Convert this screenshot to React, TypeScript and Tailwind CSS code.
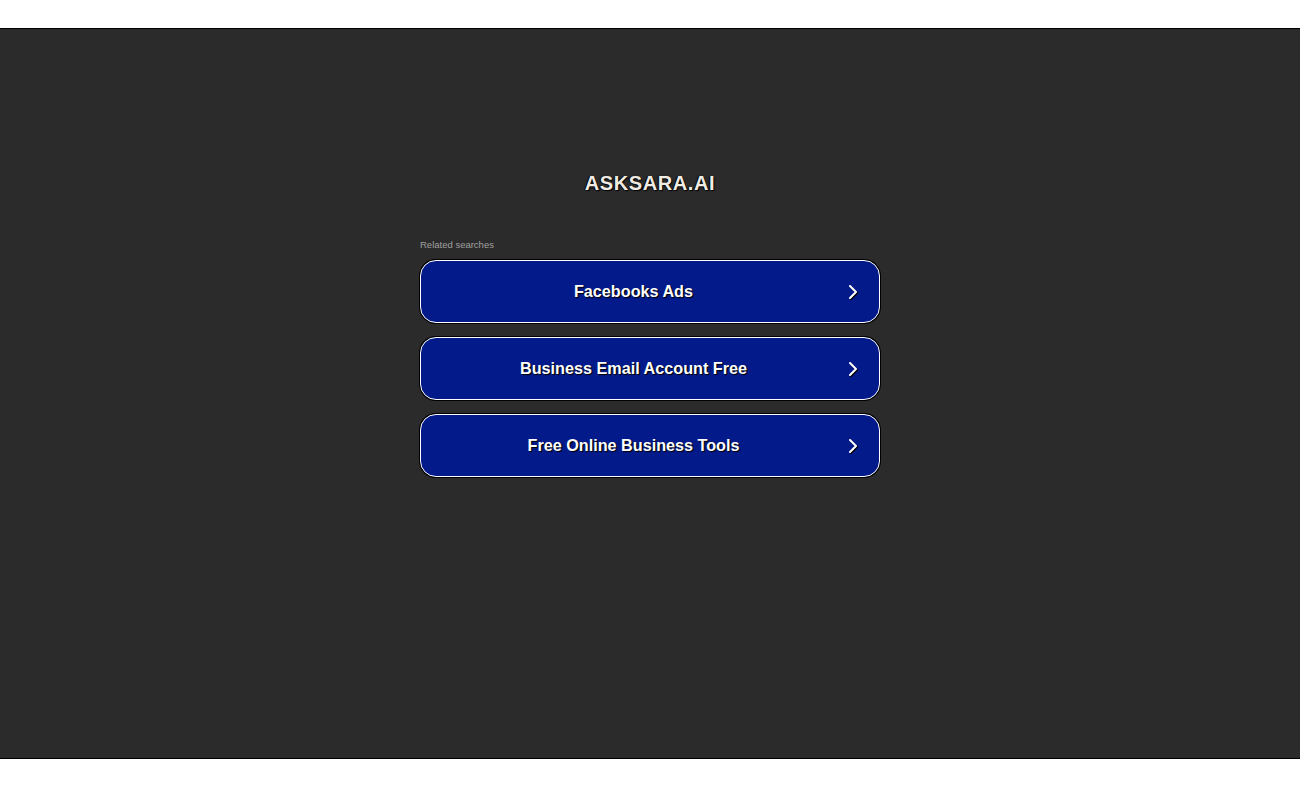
import { ChevronRight } from "lucide-react";

const searches = ["Facebooks Ads", "Business Email Account Free", "Free Online Business Tools"];

export default function App() {
  return (
    <div className="min-h-[788px] bg-white flex flex-col font-['Liberation_Sans',Arial,sans-serif]">
      <div className="h-[28px] bg-white" />
      <main className="h-[731px] bg-[#2b2b2b] border-y border-black flex flex-col items-center">
        <h1 className="mt-[142px] text-[20px] leading-[24px] font-bold tracking-[0.6px] text-[#f0ece4] [text-shadow:1px_1px_1px_#000,-1px_0_1px_#000]">
          ASKSARA.AI
        </h1>

        <section className="mt-[44px] w-[460px]">
          <p className="text-[9.5px] leading-[12px] text-[#a0a0a0] mb-[9px]">Related searches</p>
          <div className="flex flex-col gap-[14px]">
            {searches.map((label) => (
              <a
                key={label}
                href="#"
                className="h-[63px] flex items-center rounded-[16px] border border-white bg-[#031a8a] shadow-[0_0_0_1px_#000] text-white"
              >
                <span className="flex-1 text-center text-[16.2px] font-bold [text-shadow:1px_1px_1px_#000]">
                  {label}
                </span>
                <span className="w-[33px] pr-[20px] flex justify-center">
                  <ChevronRight size={24} strokeWidth={2} className="shrink-0 drop-shadow-[1px_1px_0_#000]" />
                </span>
              </a>
            ))}
          </div>
        </section>
      </main>
    </div>
  );
}
